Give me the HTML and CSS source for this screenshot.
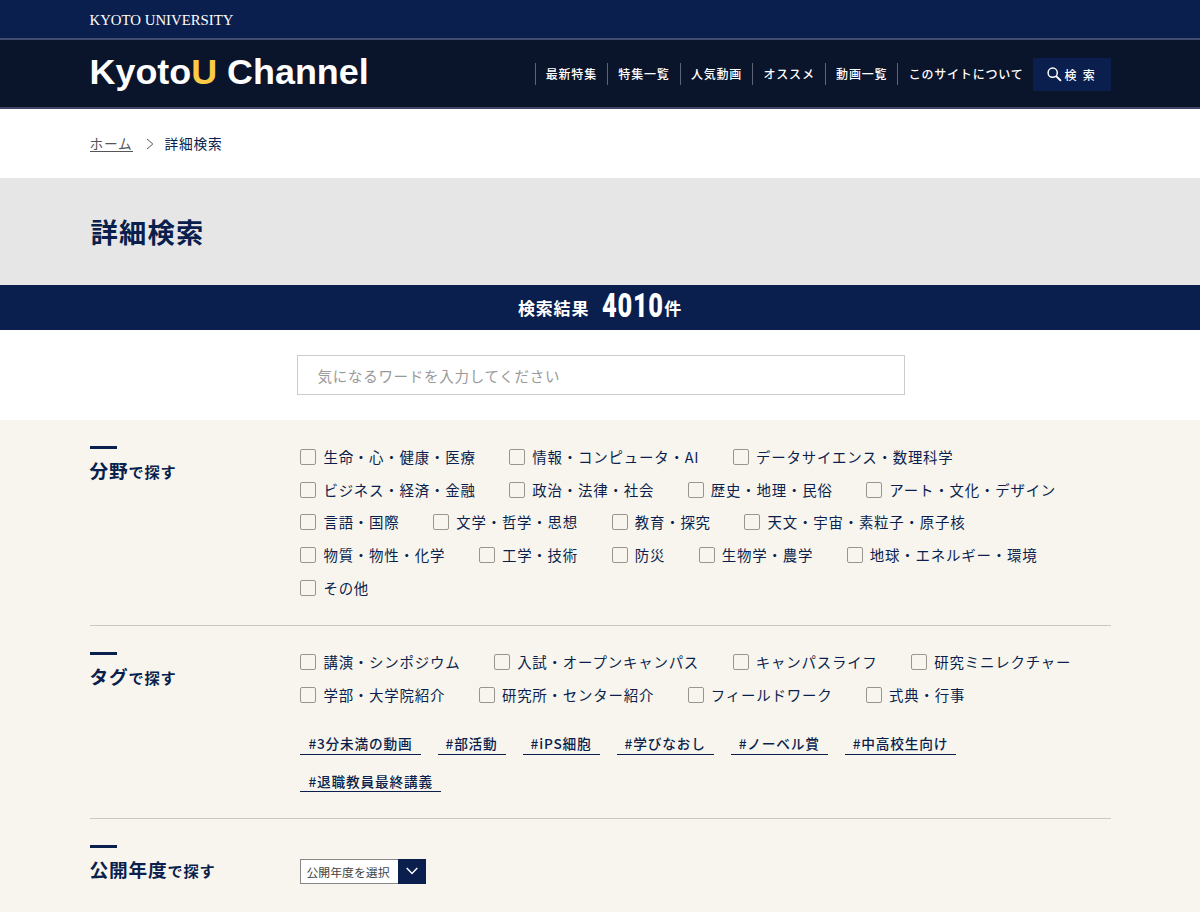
FILE: index.html
```html
<!DOCTYPE html>
<html lang="ja">
<head>
    <meta charset="UTF-8">
    <meta name="viewport" content="width=device-width, initial-scale=1.0">
    <title>詳細検索 | KyotoU Channel</title>
    <link rel="stylesheet" href="styles.css">
</head>
<body>
    <header>
        <div class="univ-bar">
            <a class="univ-name inner" href="#">KYOTO UNIVERSITY</a>
        </div>
        <div class="header-main">
            <div class="header-inner inner">
                <a class="logo" href="#">Kyoto<span>U</span> Channel</a>
                <nav>
                    <ul class="nav-list">
                        <li><a href="#">最新特集</a></li>
                        <li><a href="#">特集一覧</a></li>
                        <li><a href="#">人気動画</a></li>
                        <li><a href="#">オススメ</a></li>
                        <li><a href="#">動画一覧</a></li>
                        <li><a href="#">このサイトについて</a></li>
                    </ul>
                    <a class="search-button" href="#">
                        <svg width="15" height="15" viewBox="0 0 15 15" fill="none" stroke="#fff">
                            <circle cx="5.7" cy="5.7" r="4.6" stroke-width="1.5"/>
                            <path d="M8.9 8.9l5 5" stroke-width="2"/>
                        </svg>
                        <span>検 索</span>
                    </a>
                </nav>
            </div>
        </div>
    </header>

    <div class="breadcrumb inner">
        <a href="#">ホーム</a>
        <svg width="8" height="12" viewBox="0 0 8 12" fill="none" stroke="#555" stroke-width="1">
            <path d="M1 1l5.8 5L1 11"/>
        </svg>
        <span>詳細検索</span>
    </div>

    <div class="page-title">
        <h1 class="inner">詳細検索</h1>
    </div>

    <div class="result-bar">
        <span class="result-label">検索結果</span>
        <span class="result-count">4010</span>
        <span class="result-unit">件</span>
    </div>

    <main>
        <div class="keyword">
            <input type="text" name="keyword" placeholder="気になるワードを入力してください">
        </div>

        <div class="conditions">
            <section class="inner">
                <h2>分野<small>で探す</small></h2>
                <div class="field">
                    <div class="check-list">
                        <label><input type="checkbox">生命・心・健康・医療</label>
                        <label><input type="checkbox">情報・コンピュータ・AI</label>
                        <label><input type="checkbox">データサイエンス・数理科学</label>
                        <label><input type="checkbox">ビジネス・経済・金融</label>
                        <label><input type="checkbox">政治・法律・社会</label>
                        <label><input type="checkbox">歴史・地理・民俗</label>
                        <label><input type="checkbox">アート・文化・デザイン</label>
                        <label><input type="checkbox">言語・国際</label>
                        <label><input type="checkbox">文学・哲学・思想</label>
                        <label><input type="checkbox">教育・探究</label>
                        <label><input type="checkbox">天文・宇宙・素粒子・原子核</label>
                        <label><input type="checkbox">物質・物性・化学</label>
                        <label><input type="checkbox">工学・技術</label>
                        <label><input type="checkbox">防災</label>
                        <label><input type="checkbox">生物学・農学</label>
                        <label><input type="checkbox">地球・エネルギー・環境</label>
                        <label><input type="checkbox">その他</label>
                    </div>
                </div>
            </section>

            <section class="inner">
                <h2>タグ<small>で探す</small></h2>
                <div class="field">
                    <div class="check-list">
                        <label><input type="checkbox">講演・シンポジウム</label>
                        <label><input type="checkbox">入試・オープンキャンパス</label>
                        <label><input type="checkbox">キャンパスライフ</label>
                        <label><input type="checkbox">研究ミニレクチャー</label>
                        <label><input type="checkbox">学部・大学院紹介</label>
                        <label><input type="checkbox">研究所・センター紹介</label>
                        <label><input type="checkbox">フィールドワーク</label>
                        <label><input type="checkbox">式典・行事</label>
                    </div>
                    <div class="tag-list">
                        <a href="#">#3分未満の動画</a>
                        <a href="#">#部活動</a>
                        <a href="#">#iPS細胞</a>
                        <a href="#">#学びなおし</a>
                        <a href="#">#ノーベル賞</a>
                        <a href="#">#中高校生向け</a>
                        <a href="#">#退職教員最終講義</a>
                    </div>
                </div>
            </section>

            <section class="inner">
                <h2>公開年度<small>で探す</small></h2>
                <div class="field">
                    <button class="year-select" type="button">
                        <span class="year-text">公開年度を選択</span>
                        <span class="year-arrow">
                            <svg width="12" height="8" viewBox="0 0 12 8" fill="none" stroke="#fff" stroke-width="1.4">
                                <path d="M.7 1L6 6.6 11.3 1"/>
                            </svg>
                        </span>
                    </button>
                </div>
            </section>
        </div>
    </main>
</body>
</html>
```
FILE: styles.css
```css
* {
    box-sizing: border-box;
}

body {
    margin: 0;
    height: 912px;
    overflow: hidden;
    background-color: #fff;
    color: #0a1f4d;
    font-family: "Noto Sans CJK JP", sans-serif;
    letter-spacing: 0.05em;
}

a {
    color: inherit;
    text-decoration: none;
}

h1,
h2,
ul {
    margin: 0;
    padding: 0;
}

.inner {
    width: 1021px;
    margin: 0 auto;
}

/* header */
.univ-bar {
    height: 40px;
    background-color: #0a1f4d;
    border-bottom: 2px solid #414c70;
    display: flex;
    align-items: center;
}

.univ-name {
    padding-top: 2px;
    color: #fff;
    font-family: "Liberation Serif", serif;
    font-size: 14.8px;
    line-height: 1;
    letter-spacing: 0;
}

.header-main {
    height: 69px;
    background-color: #0a142b;
    border-bottom: 2px solid #414669;
}

.header-inner {
    height: 68px;
    display: flex;
    justify-content: space-between;
    align-items: center;
}

.logo {
    padding-bottom: 2px;
    color: #fff;
    font-family: "Liberation Sans", sans-serif;
    font-size: 35.9px;
    font-weight: bold;
    line-height: 1;
    letter-spacing: 0;
}

.logo span {
    color: #fccb46;
}

nav {
    display: flex;
    align-items: center;
}

.nav-list {
    display: flex;
    list-style: none;
}

.nav-list li {
    padding: 0 10.2px;
    border-left: 1px solid #5d6474;
    color: #fff;
    font-size: 12px;
    font-weight: 500;
    line-height: 22px;
}

.nav-list li:last-child {
    padding-right: 9px;
}

.search-button {
    width: 78px;
    height: 33px;
    background-color: #0a1f4d;
    color: #fff;
    display: flex;
    justify-content: center;
    align-items: center;
    gap: 2px;
    font-size: 12px;
    font-weight: 500;
    word-spacing: 2px;
}

/* breadcrumb and title */
.breadcrumb {
    height: 69px;
    display: flex;
    align-items: center;
    font-size: 13.7px;
}

.breadcrumb a {
    color: #555;
    line-height: 16px;
    border-bottom: 1px solid #555;
}

.breadcrumb svg {
    margin: 0 11px 0 13px;
}

.breadcrumb span {
    padding-bottom: 1px;
}

.page-title {
    height: 106.5px;
    background-color: #e6e6e6;
    display: flex;
    align-items: center;
}

.page-title h1 {
    font-size: 27.3px;
    font-weight: 700;
    letter-spacing: 0.045em;
    text-indent: 1px;
}

.result-bar {
    height: 45.5px;
    background-color: #0a1f4d;
    color: #fff;
    display: flex;
    justify-content: center;
    align-items: center;
    font-size: 17px;
    font-weight: 700;
}

.result-count {
    width: 62px;
    margin-left: 13px;
    padding-bottom: 2px;
    font-family: Roboto, sans-serif;
    font-size: 32.5px;
    font-weight: 900;
    line-height: 1;
    letter-spacing: 0.03em;
    transform: scaleX(0.78);
    transform-origin: left;
    white-space: nowrap;
}

/* keyword */
.keyword {
    height: 90px;
    display: flex;
    justify-content: center;
    align-items: center;
}

.keyword input {
    width: 608px;
    height: 40px;
    margin-left: 1px;
    padding: 0 20px;
    border: 1px solid #ccc;
    font-family: inherit;
    font-size: 14.5px;
    letter-spacing: 0.05em;
}

.keyword input::placeholder {
    color: #999;
}

/* search conditions */
.conditions {
    height: 492px;
    background-color: #f8f5ee;
}

section {
    display: flex;
    border-bottom: 1px solid #ccc9c3;
}

section:last-child {
    border-bottom: none;
}

h2 {
    width: 210.9px;
    flex: none;
    padding-top: 26px;
    font-size: 18.7px;
    font-weight: 700;
    line-height: 42px;
}

h2::before {
    content: "";
    display: block;
    width: 27px;
    height: 3px;
    background-color: #0a1f4d;
}

h2 small {
    font-size: 15.2px;
}

.field {
    flex: 1;
    padding: 20.4px 0;
}

.check-list {
    display: flex;
    flex-wrap: wrap;
    column-gap: 33.6px;
}

.check-list label {
    height: 32.75px;
    padding-bottom: 1px;
    display: flex;
    align-items: center;
    font-size: 14.45px;
}

.check-list input {
    appearance: none;
    width: 16px;
    height: 16px;
    margin: 1px 7px 0 0;
    border: 1px solid #999690;
    border-radius: 2px;
}

.tag-list {
    padding: 22px 0 5px;
    display: flex;
    flex-wrap: wrap;
    gap: 16px 17px;
}

.tag-list a {
    height: 21.5px;
    padding: 0 8px;
    border-bottom: 1px solid #0a1f4d;
    font-size: 13.7px;
    font-weight: 500;
    line-height: 20px;
}

.year-select {
    width: 125.5px;
    height: 25px;
    margin-top: 19.5px;
    padding: 0;
    border: 1px solid #888;
    border-right: none;
    background-color: #fff;
    color: #444;
    display: flex;
    align-items: center;
    font-family: inherit;
    font-size: 11.9px;
}

.year-text {
    flex: 1;
    padding-left: 5px;
    text-align: left;
    letter-spacing: 0;
}

.year-arrow {
    width: 28px;
    height: 25px;
    background-color: #0a1f4d;
    display: flex;
    justify-content: center;
    align-items: center;
}
```
